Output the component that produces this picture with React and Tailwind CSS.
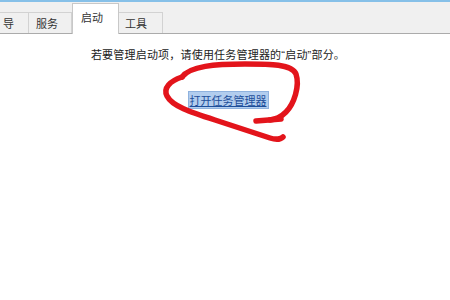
import React from 'react'

const tabs = [
  { label: '导', w: 'w-[29px]', pl: 'pl-[3px]' },
  { label: '服务', w: 'w-[43px]', pl: 'pl-[7px]' },
  { label: '启动', w: 'w-[47px]', pl: 'pl-[8px]', active: true },
  { label: '工具', w: 'w-[44px]', pl: 'pl-[6px]' },
]

export default function App() {
  return (
    <div
      className="relative w-[450px] h-[300px] overflow-hidden bg-white"
      style={{ fontFamily: '"Noto Sans CJK SC", "Noto Sans", sans-serif' }}
    >
      {/* window top edge */}
      <div className="h-[2px] bg-[#86c0e8]" />

      {/* tab strip */}
      <div className="flex items-end h-[32px] bg-[#f0f0f0] border-b border-[#ababab]">
        {tabs.map((t) =>
          t.active ? (
            <div
              key={t.label}
              className={`${t.w} ${t.pl} h-[31px] -mb-px bg-white border border-b-0 border-[#c8c8c8] text-[11px] leading-[26px] text-[#333]`}
            >
              {t.label}
            </div>
          ) : (
            <div
              key={t.label}
              className={`${t.w} ${t.pl} h-[21px] bg-[#f0f0f0] border-r border-t border-[#d2d2d2] text-[11px] leading-[20px] text-[#333]`}
            >
              {t.label}
            </div>
          )
        )}
      </div>

      {/* content */}
      <div className="flex flex-col items-center pt-[12px] pr-[14px]">
        <p className="text-[11px] leading-[16px] tracking-[0.2px] text-[#222]">
          若要管理启动项，请使用任务管理器的
          <span className="font-['Liberation_Sans']">“</span>
          启动
          <span className="font-['Liberation_Sans']">”</span>
          部分。
        </p>
        <div className="mt-[23px] pl-[20px]">
          <span className="px-[1px] bg-[#b2cdee] text-[11px] leading-[15px] text-[#1d4e9a] underline outline outline-1 outline-[#8fb2de]">
            打开任务管理器
          </span>
        </div>
      </div>

      {/* red hand-drawn annotation */}
      <svg
        className="absolute left-0 top-0 pointer-events-none"
        width="450"
        height="300"
        viewBox="0 0 450 300"
      >
        <g fill="none" stroke="#e3141b" strokeWidth="5.5" strokeLinecap="round" strokeLinejoin="round">
          <path d="M182 77 C190 66 215 64 245 64 C270 64 292 64 296 74 C300 86 294 104 286 112 C280 118 276 119 270 120" />
          <path d="M256 121 L281 119" />
          <path d="M182 77 C170 81 163 88 167 96 C172 106 190 112 215 120 C240 128 258 134 270 138 C276 140 281 139 283 137" />
        </g>
      </svg>
    </div>
  )
}
